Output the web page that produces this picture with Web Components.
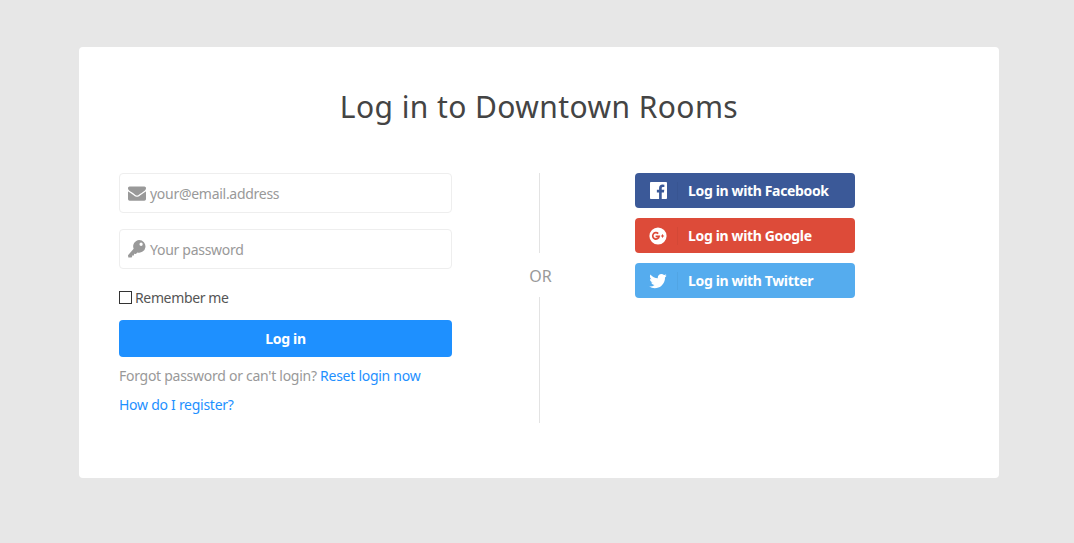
<!DOCTYPE html>
<html>
<head>
<meta charset="utf-8">
<title>Log in</title>
<style>
    html, body { margin: 0; height: 100%; }
    body {
        background: #e7e7e7;
        font-family: "Noto Sans", "Open Sans", sans-serif;
        color: #444;
    }
</style>
</head>
<body>
<login-page>
    <span slot="title">Log in to Downtown Rooms</span>
    <login-form slot="left"></login-form>
    <span slot="or">OR</span>
    <social-button slot="right" kind="facebook">Log in with Facebook</social-button>
    <social-button slot="right" kind="google">Log in with Google</social-button>
    <social-button slot="right" kind="twitter">Log in with Twitter</social-button>
</login-page>

<script>
const ICONS = {
    mail: '<svg viewBox="0 0 1792 1792" width="18" height="18"><path fill="#999" d="M1792 710v794q0 66-47 113t-113 47h-1472q-66 0-113-47t-47-113v-794q44 49 101 87 362 246 497 345 57 42 92.5 65.5t94.5 48 110 24.5h2q51 0 110-24.5t94.5-48 92.5-65.5q170-123 498-345 57-39 100-87zm0-294q0 79-49 151t-122 123q-376 261-468 325-10 7-42.5 30.5t-54 38-52 32.5-57.5 27-50 9h-2q-23 0-50-9t-57.5-27-52-32.5-54-38-42.5-30.5q-91-64-262-182.5t-205-142.5q-62-42-117-115.5t-55-136.5q0-78 41.5-130t118.5-52h1472q65 0 112.5 47t47.5 113z"/></svg>',
    key: '<svg viewBox="1 1 16.5 16.5" width="18" height="18"><path fill="#999" fill-rule="evenodd" d="M11.2 1a5.8 5.8 0 1 1-1.5 11.4L8.2 13.9 6.6 13.7 6.4 15.3 4.8 15.2 4.7 16.8 3.4 17H1.3L1 14.9 6.2 9.1A5.8 5.8 0 0 1 11.2 1zM13 3.4a1.5 1.5 0 1 0 0 3 1.5 1.5 0 0 0 0-3z"/></svg>',
    facebook: '<svg viewBox="128 128 1536 1536" width="17" height="17"><path fill="#fff" d="M1579 128q35 0 60 25t25 60v1366q0 35-25 60t-60 25h-391v-595h199l30-232h-229v-148q0-56 23.5-84t91.5-28l122-1v-207q-63-9-178-9-136 0-217.5 80t-81.5 226v171h-200v232h200v595h-735q-35 0-60-25t-25-60v-1366q0-35 25-60t60-25h1366z"/></svg>',
    google: '<svg viewBox="0 0 18 18" width="18" height="18"><circle cx="9" cy="9" r="8.6" fill="#fff"/><path fill="none" stroke="#dd4b39" stroke-width="1.7" d="M9.2 6.6a3.2 3.2 0 1 0 .9 2.7H6.6"/><path fill="none" stroke="#dd4b39" stroke-width="1" d="M11.9 9h3.2M13.5 7.4v3.2"/></svg>',
    twitter: '<svg viewBox="0 0 1792 1792" width="20" height="20"><path fill="#fff" d="M1684 408q-67 98-162 167 1 14 1 42 0 130-38 259.5t-115.5 248.5-184.5 210.5-258 146-323 54.5q-271 0-496-145 42 5 81 5 224 0 398-137-105-2-188-64.5t-114-159.5q33 5 61 5 43 0 85-11-112-23-185.5-111.5t-73.5-205.5v-4q68 38 146 41-66-44-105-115t-39-154q0-88 44-163 121 149 294.5 238.5t371.5 99.5q-8-38-8-74 0-134 94.5-228.5t228.5-94.5q140 0 236 102 109-21 200-76-38 118-132 175 90-10 182-50z"/></svg>'
};

class LoginPage extends HTMLElement {
    constructor() {
        super();
        this.attachShadow({mode: 'open'});
        this.shadowRoot.innerHTML = `
            <style>
                :host { display: block; padding: 47px 75px 65px 79px; }
                .card {
                    background: #fff;
                    border-radius: 4px;
                    height: 431px;
                    box-sizing: border-box;
                    padding: 40px 40px 0;
                }
                h1 {
                    margin: 0 0 46px;
                    height: 40px;
                    line-height: 40px;
                    font-size: 30px;
                    font-weight: 400;
                    letter-spacing: .42px;
                    text-align: center;
                    color: #444;
                }
                .cols {
                    display: grid;
                    grid-template-columns: 333px 175px 1fr;
                    height: 250px;
                }
                .divider {
                    display: flex;
                    flex-direction: column;
                    align-items: center;
                    color: #999;
                    font-size: 16px;
                }
                .line { width: 1px; background: #e3e3e3; }
                .line.top { height: 80px; }
                .line.bottom { flex: 1; }
                .or { height: 44px; line-height: 46px; padding-left: 2px; }
                .right {
                    padding-left: 8px;
                    display: flex;
                    flex-direction: column;
                    gap: 10px;
                }
            </style>
            <div class="card">
                <h1><slot name="title"></slot></h1>
                <div class="cols">
                    <div><slot name="left"></slot></div>
                    <div class="divider">
                        <div class="line top"></div>
                        <div class="or"><slot name="or"></slot></div>
                        <div class="line bottom"></div>
                    </div>
                    <div class="right"><slot name="right"></slot></div>
                </div>
            </div>
        `;
    }
}
customElements.define('login-page', LoginPage);

class LoginField extends HTMLElement {
    constructor() {
        super();
        this.attachShadow({mode: 'open'});
        this.shadowRoot.innerHTML = `
            <style>
                :host {
                    display: flex;
                    align-items: center;
                    height: 40px;
                    box-sizing: border-box;
                    border: 1px solid #eee;
                    border-radius: 4px;
                    padding-left: 8px;
                    margin-bottom: 16px;
                    color: #999;
                    font-size: 14px;
                    letter-spacing: -.28px;
                }
                .icon { display: flex; width: 22px; }
            </style>
            <span class="icon"></span>
            <slot></slot>
        `;
    }
    connectedCallback() {
        this.shadowRoot.querySelector('.icon').innerHTML = ICONS[this.getAttribute('icon')];
    }
}
customElements.define('login-field', LoginField);

class LoginForm extends HTMLElement {
    constructor() {
        super();
        this.attachShadow({mode: 'open'});
        this.shadowRoot.innerHTML = `
            <style>
                :host { display: block; font-size: 14px; color: #999; letter-spacing: -.27px; }
                .remember {
                    display: flex;
                    align-items: center;
                    gap: 3px;
                    height: 18px;
                    margin-top: 19px;
                    color: #555;
                    letter-spacing: -.36px;
                }
                .box {
                    width: 13px;
                    height: 13px;
                    box-sizing: border-box;
                    border: 1px solid #333;
                }
                button {
                    display: block;
                    width: 100%;
                    height: 37px;
                    margin-top: 14px;
                    border: 0;
                    border-radius: 4px;
                    background: #1e90ff;
                    color: #fff;
                    font: bold 14px "Noto Sans", sans-serif;
                    letter-spacing: -.3px;
                }
                p { margin: 0; height: 29px; line-height: 29px; }
                p.first { margin-top: 4px; }
                a { color: #1e90ff; text-decoration: none; }
            </style>
            <login-field icon="mail">your@email.address</login-field>
            <login-field icon="key">Your password</login-field>
            <div class="remember"><span class="box"></span>Remember me</div>
            <button>Log in</button>
            <p class="first">Forgot password or can't login? <a href="#">Reset login now</a></p>
            <p><a href="#">How do I register?</a></p>
        `;
    }
}
customElements.define('login-form', LoginForm);

class SocialButton extends HTMLElement {
    constructor() {
        super();
        this.attachShadow({mode: 'open'});
        this.shadowRoot.innerHTML = `
            <style>
                :host {
                    display: flex;
                    align-items: center;
                    width: 220px;
                    height: 35px;
                    border-radius: 4px;
                    color: #fff;
                    font-size: 14px;
                    font-weight: 700;
                    letter-spacing: -.35px;
                }
                :host([kind=facebook]) { background: #3b5998; }
                :host([kind=google]) { background: #dd4b39; }
                :host([kind=twitter]) { background: #55acee; }
                .icon {
                    width: 43px;
                    height: 18px;
                    padding-left: 4px;
                    display: flex;
                    align-items: center;
                    justify-content: center;
                    box-sizing: border-box;
                    border-right: 1px solid rgba(0,0,0,.04);
                    margin-right: 10px;
                }
            </style>
            <span class="icon"></span>
            <slot></slot>
        `;
    }
    connectedCallback() {
        this.shadowRoot.querySelector('.icon').innerHTML = ICONS[this.getAttribute('kind')];
    }
}
customElements.define('social-button', SocialButton);
</script>
</body>
</html>
